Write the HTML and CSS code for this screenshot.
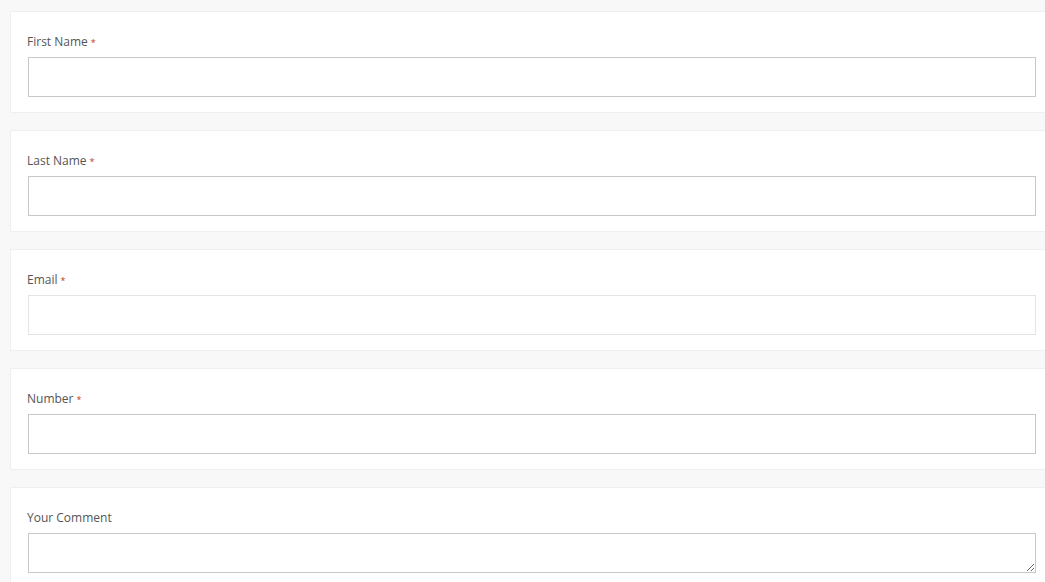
FILE: index.html
```html
<!DOCTYPE html>
<html lang="en">

<head>
    <meta charset="UTF-8">
    <meta name="viewport" content="width=device-width, initial-scale=1.0">
    <title>contact form</title>
    <link rel="stylesheet" href="styles.css">
</head>

<body>
    <form class="wrapper">
        <div class="field">
            <label>First Name<span class="req">*</span></label>
            <input type="text" name="first_name">
        </div>

        <div class="field">
            <label>Last Name<span class="req">*</span></label>
            <input type="text" name="last_name">
        </div>

        <div class="field">
            <label>Email<span class="req">*</span></label>
            <input type="email" name="email" class="light">
        </div>

        <div class="field">
            <label>Number<span class="req">*</span></label>
            <input type="number" name="number">
        </div>

        <div class="field">
            <label>Your Comment</label>
            <textarea name="comment"></textarea>
        </div>
    </form>
</body>

</html>
```

FILE: styles.css
```css
body {
    margin: 0;
    background-color: #f8f8f8;
    font-family: "Open Sans", "Noto Sans", sans-serif;
    overflow: hidden;
}

.wrapper {
    display: flex;
    flex-direction: column;
    gap: 17px;
    padding: 11px 0 0 10px;
}

.field {
    display: flex;
    flex-direction: column;
    width: 1044px;
    box-sizing: border-box;
    background-color: #fff;
    border: 1px solid #efefef;
    padding: 20px 17px 15px 17px;
}

label {
    display: block;
    height: 20px;
    font-size: 12px;
    line-height: 20px;
    color: #555;
    margin: 0 0 5px -1px;
}

.req {
    color: #c0392b;
    font-size: 9px;
    line-height: 1;
    margin-left: 3px;
}

input,
textarea {
    display: block;
    box-sizing: border-box;
    width: 100%;
    height: 40px;
    margin: 0;
    border: 1px solid #c8c8c8;
    border-radius: 0;
    background-color: #fff;
    font-family: inherit;
}

input.light {
    border-color: #e4e4e4;
}
```
